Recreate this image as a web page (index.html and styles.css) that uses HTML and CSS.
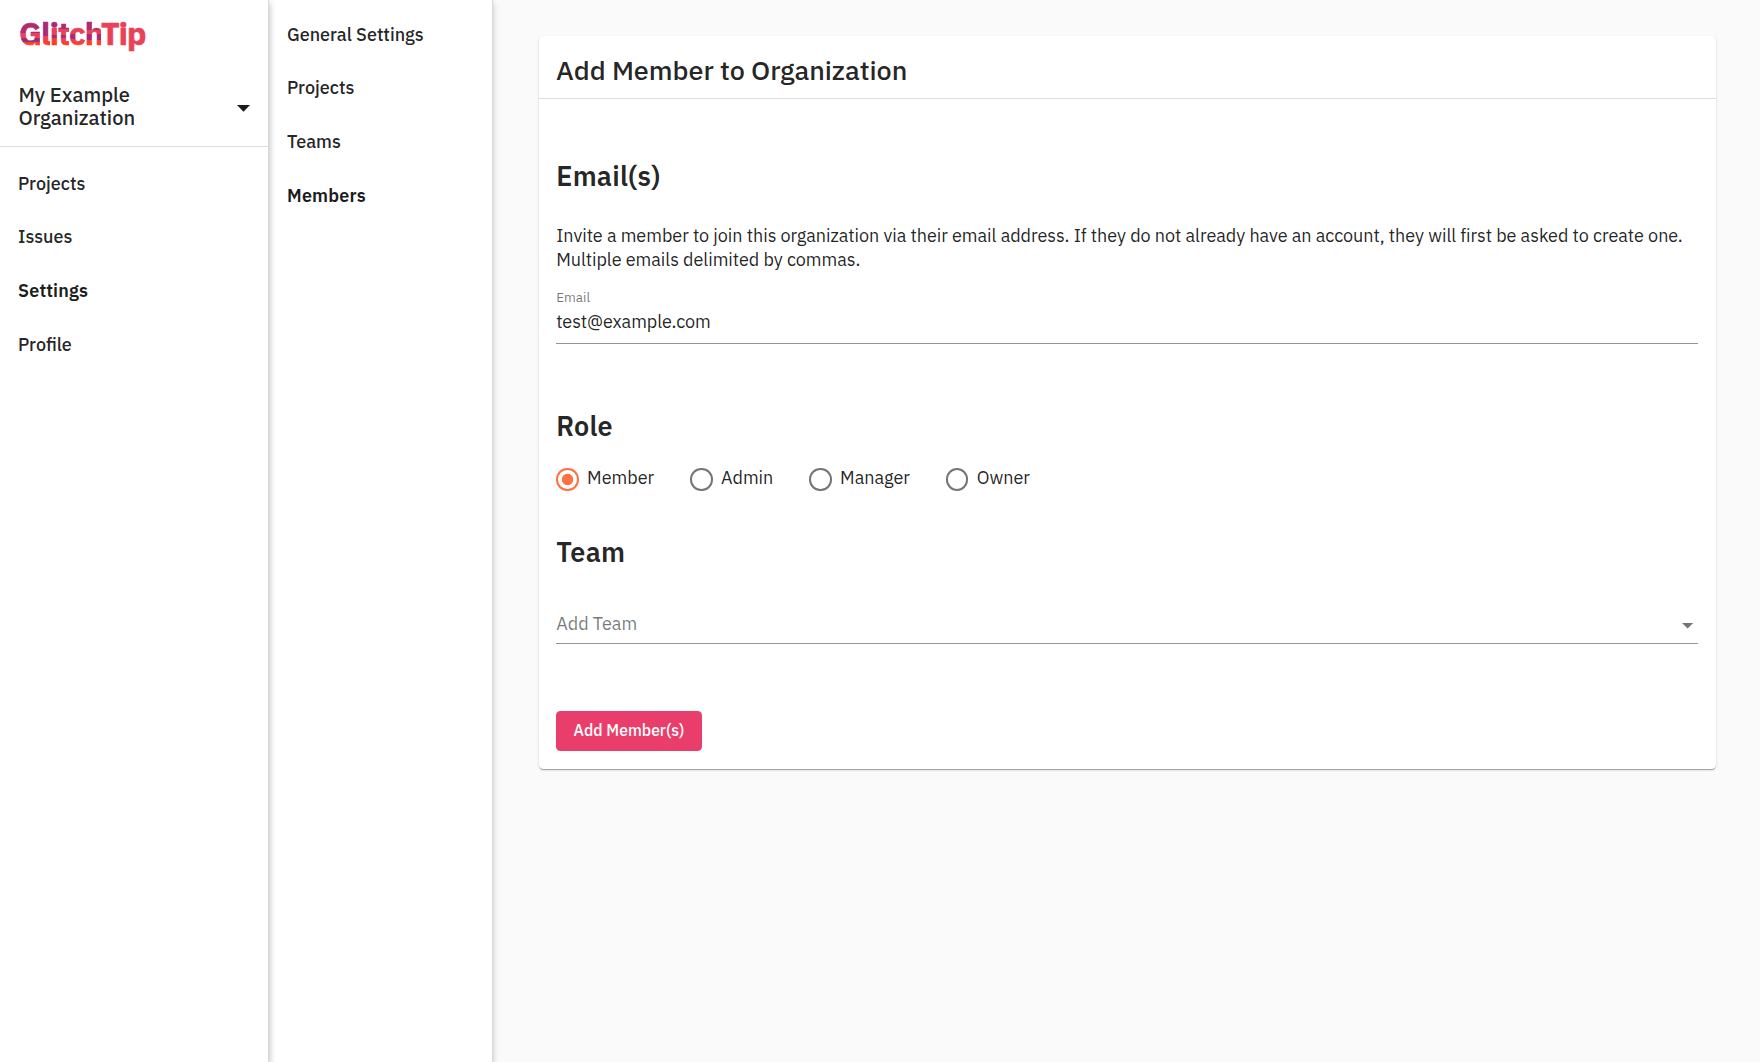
FILE: index.html
```html
<!DOCTYPE html>
<html lang="en">
<head>
<meta charset="utf-8">
<title>GlitchTip</title>
<link rel="stylesheet" href="styles.css">
</head>
<body>
<nav class="sidebar">
  <div class="logo"><span class="g g1">G</span><span class="g g2">l</span><span class="g g3">i</span><span class="g g4">t</span><span class="g g5">c</span><span class="g g6">h</span><span>Tip</span></div>
  <div class="org">
    <span class="org-name">My Example Organization</span>
    <svg class="org-arrow" width="13" height="7" viewBox="0 0 13 7"><path d="M0 0h13L6.5 6.7z"/></svg>
  </div>
  <ul class="links">
    <li>Projects</li>
    <li>Issues</li>
    <li class="active">Settings</li>
    <li>Profile</li>
  </ul>
</nav>
<nav class="sidebar subnav">
  <ul class="links">
    <li>General Settings</li>
    <li>Projects</li>
    <li>Teams</li>
    <li class="active">Members</li>
  </ul>
</nav>
<main class="main">
  <section class="card">
    <h1 class="title">Add Member to Organization</h1>
    <form class="form">
      <h2>Email(s)</h2>
      <p class="hint">Invite a member to join this organization via their email address. If they do not already have an account, they will first be asked to create one. Multiple emails delimited by commas.</p>
      <div class="field">
        <span class="field-label">Email</span>
        <span class="field-value">test@example.com</span>
      </div>
      <h2 class="role-heading">Role</h2>
      <div class="radios">
        <label class="radio checked"><i class="circle"></i>Member</label>
        <label class="radio"><i class="circle"></i>Admin</label>
        <label class="radio"><i class="circle"></i>Manager</label>
        <label class="radio"><i class="circle"></i>Owner</label>
      </div>
      <h2 class="team-heading">Team</h2>
      <div class="select">
        <span>Add Team</span>
        <svg width="11.2" height="5.6" viewBox="0 0 10 5"><path d="M0 0h10L5 5z"/></svg>
      </div>
      <button class="submit" type="button">Add Member(s)</button>
    </form>
  </section>
</main>
</body>
</html>
```
FILE: styles.css
```css
* { box-sizing: border-box; }
body {
  margin: 0;
  height: 1062px;
  display: flex;
  overflow: hidden;
  background: #fafafa;
  color: rgba(0, 0, 0, .87);
  font: 400 18px/24px "IBM Plex Sans", Roboto, sans-serif;
}
.sidebar {
  position: relative;
  z-index: 2;
  flex: none;
  width: 269px;
  background: #fff;
  border-right: 1px solid #d9d9d9;
  box-shadow: 0 3px 7px rgba(0, 0, 0, .3);
}
.subnav { z-index: 1; width: 224px; padding-top: 7.6px; box-shadow: 0 3px 6px rgba(0, 0, 0, .22); }
.logo {
  padding: 13px 0 0 19px;
  height: 84px;
  font-size: 32px;
  font-weight: 700;
  line-height: 40px;
  letter-spacing: -.98px;
  color: #ea4158;
  -webkit-text-stroke: .6px;
}
.g { -webkit-background-clip: text; background-clip: text; color: transparent; }
.g1 { background-image: linear-gradient(#b32a6d 50%, #ea4158 50% 62%, #9b2c7a 62% 71%, #ff3f25 71%); }
.g2 { background-image: linear-gradient(#a82a78 56%, #ea4158 56% 69%, #ff3f25 69%); }
.g3 { background-image: linear-gradient(#a82a78 37%, #ea4158 37% 54%, #a82a78 54% 63%, #ff3f25 63%); }
.g4 { background-image: linear-gradient(#a82a78 40%, #ea4158 40% 55%, #a82a78 55% 63%, #ea4158 63% 72%, #ff3f25 72%); }
.g5 { background-image: linear-gradient(#ea4158 53%, #a82a78 53% 64%, #ea4158 64% 71%, #ff3f25 71%); }
.g6 { background-image: linear-gradient(#b32a6d 43%, #ea4158 43% 52%, #a82a78 52% 66%, #ff3f25 66%); }
.org {
  height: 63px;
  padding: 0 18px 0 18.4px;
  display: flex;
  justify-content: space-between;
  border-bottom: 1px solid #dedede;
}
.org-name { width: 140px; font-size: 20.1px; font-weight: 500; line-height: 22.5px; }
.org-arrow { margin-top: 20.5px; fill: #1c1c1c; }
.links { list-style: none; margin: 0; padding: 0 0 0 18px; font-weight: 500; line-height: 53.7px; }
.org + .links { margin-top: 9.6px; }
.active { font-weight: 600; letter-spacing: .18px; color: #1c1c1c; }
.main { flex: 1; padding: 36px 44px 0 46px; }
.card {
  height: 733px;
  background: #fff;
  border-radius: 4.5px;
  box-shadow: 0 2px 1px -1px rgba(0, 0, 0, .2), 0 1px 1px rgba(0, 0, 0, .14), 0 1px 3px rgba(0, 0, 0, .12);
}
.title {
  margin: 0;
  padding: 18px 17.5px 12px 17px;
  border-bottom: 1px solid #dedede;
  font-size: 27px;
  font-weight: 500;
  line-height: 32px;
  letter-spacing: -.06px;
}
.form { padding: 59px 18px 0 17.2px; display: flex; flex-direction: column; }
h2 { margin: 0; font-size: 27px; font-weight: 600; line-height: 36px; letter-spacing: .25px; }
.hint { margin: 30px 0 0; letter-spacing: -.04px; }
.field {
  margin-top: 18px;
  height: 54px;
  display: flex;
  flex-direction: column;
  border-bottom: 1px solid #949494;
}
.field-label { font-size: 13.5px; line-height: 15px; color: rgba(0, 0, 0, .54); }
.field-value { margin-top: 7px; line-height: 20px; letter-spacing: -.06px; }
.role-heading { margin-top: 64px; }
.radios { margin-top: 22px; display: flex; gap: 35.8px; }
.radio { display: flex; gap: 8.4px; line-height: 24px; }
.circle {
  width: 22.5px;
  height: 22.5px;
  margin-top: 2px;
  border: 2px solid #757575;
  border-radius: 50%;
}
.checked .circle { border-color: #ff7043; background: radial-gradient(circle, #ff7043 5.3px, transparent 6.1px); }
.team-heading { margin-top: 43px; }
.select {
  margin-top: 44px;
  height: 30px;
  padding-right: 5px;
  display: flex;
  justify-content: space-between;
  line-height: 20px;
  color: rgba(0, 0, 0, .54);
  border-bottom: 1px solid #949494;
}
.select svg { margin-top: 9.5px; fill: #757575; }
.submit {
  align-self: flex-start;
  width: 145.5px;
  height: 40px;
  margin-top: 67px;
  padding: 0 0 2px;
  border: 0;
  border-radius: 4.5px;
  background: #e93e6b;
  color: #fff;
  font: 500 15.75px/38px "IBM Plex Sans", Roboto, sans-serif;
}
```
